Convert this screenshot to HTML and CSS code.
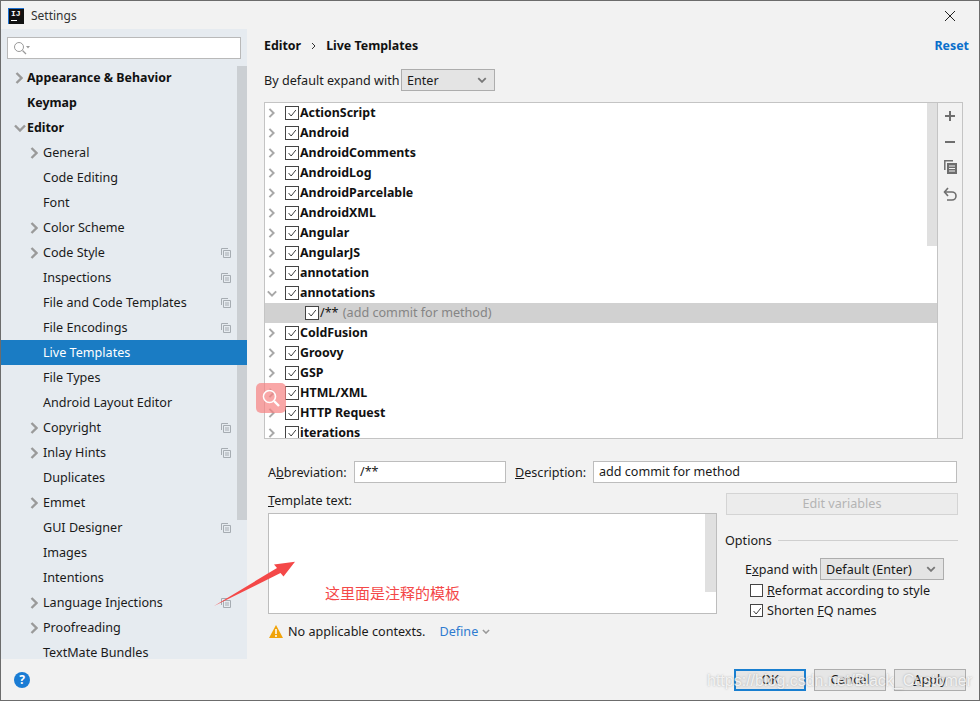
FILE: index.html
```html
<!DOCTYPE html>
<html lang="en">
<head>
    <meta charset="UTF-8">
    <meta name="viewport" content="width=device-width, initial-scale=1.0">
    <title>Settings</title>
    <link rel="stylesheet" href="styles.css">
</head>
<body>
    <svg class="defs" width="0" height="0">
        <symbol id="arrow-right" viewBox="0 0 8 12"><path d="M1.5 1l5 5-5 5" fill="none" stroke="currentColor" stroke-width="2.4"/></symbol>
        <symbol id="arrow-down" viewBox="0 0 12 8"><path d="M1 1.5l5 5 5-5" fill="none" stroke="currentColor" stroke-width="2.4"/></symbol>
        <symbol id="project" viewBox="0 0 10 10"><path d="M.5 7V.5H7M2.5 2.5h7v7h-7zM4 5h4M4 7h4" fill="none" stroke="currentColor"/></symbol>
        <symbol id="tick" viewBox="0 0 14 14"><path d="M3 7l3 3.5 5.5-7" fill="none" stroke="#333" stroke-width="1.1"/></symbol>
    </svg>

    <div class="window">
        <div class="titlebar">
            <div class="app-icon"><span>IJ</span><i></i></div>
            <div class="title">Settings</div>
            <svg class="close" width="12" height="12" viewBox="0 0 12 12"><path d="M1 1l10 10M11 1L1 11" stroke="#222" stroke-width="1"/></svg>
        </div>

        <div class="content">
            <div class="sidebar">
                <div class="search">
                    <svg width="17" height="14" viewBox="0 0 17 14"><circle cx="6" cy="6" r="4.5" fill="none" stroke="#9a9a9a"/><path d="M9.5 9.5l3.5 3.5" stroke="#9a9a9a" stroke-width="1.2"/><path d="M13 5h4l-2 2.5z" fill="#9a9a9a"/></svg>
                </div>
                <ul class="nav">
                    <li class="nav-item top"><svg class="nav-arrow"><use href="#arrow-right"/></svg>Appearance &amp; Behavior</li>
                    <li class="nav-item top">Keymap</li>
                    <li class="nav-item top"><svg class="nav-arrow down"><use href="#arrow-down"/></svg>Editor</li>
                    <li class="nav-item"><svg class="nav-arrow"><use href="#arrow-right"/></svg>General</li>
                    <li class="nav-item">Code Editing</li>
                    <li class="nav-item">Font</li>
                    <li class="nav-item"><svg class="nav-arrow"><use href="#arrow-right"/></svg>Color Scheme</li>
                    <li class="nav-item"><svg class="nav-arrow"><use href="#arrow-right"/></svg>Code Style<svg class="nav-copy"><use href="#project"/></svg></li>
                    <li class="nav-item">Inspections<svg class="nav-copy"><use href="#project"/></svg></li>
                    <li class="nav-item">File and Code Templates<svg class="nav-copy"><use href="#project"/></svg></li>
                    <li class="nav-item">File Encodings<svg class="nav-copy"><use href="#project"/></svg></li>
                    <li class="nav-item active">Live Templates</li>
                    <li class="nav-item">File Types</li>
                    <li class="nav-item">Android Layout Editor</li>
                    <li class="nav-item"><svg class="nav-arrow"><use href="#arrow-right"/></svg>Copyright<svg class="nav-copy"><use href="#project"/></svg></li>
                    <li class="nav-item"><svg class="nav-arrow"><use href="#arrow-right"/></svg>Inlay Hints<svg class="nav-copy"><use href="#project"/></svg></li>
                    <li class="nav-item">Duplicates</li>
                    <li class="nav-item"><svg class="nav-arrow"><use href="#arrow-right"/></svg>Emmet</li>
                    <li class="nav-item">GUI Designer<svg class="nav-copy"><use href="#project"/></svg></li>
                    <li class="nav-item">Images</li>
                    <li class="nav-item">Intentions</li>
                    <li class="nav-item"><svg class="nav-arrow"><use href="#arrow-right"/></svg>Language Injections<svg class="nav-copy"><use href="#project"/></svg></li>
                    <li class="nav-item"><svg class="nav-arrow"><use href="#arrow-right"/></svg>Proofreading</li>
                    <li class="nav-item">TextMate Bundles</li>
                </ul>
                <div class="side-scroll"></div>
            </div>

            <div class="main">
                <div class="crumbs">
                    <span>Editor</span>
                    <svg width="5" height="8" viewBox="0 0 5 8"><path d="M1 1l3 3-3 3" fill="none" stroke="#333"/></svg>
                    <span>Live Templates</span>
                    <a class="reset">Reset</a>
                </div>

                <div class="expand-row">
                    <span class="expand-label">By default expand with</span>
                    <div class="select expand-select">Enter<svg width="10" height="6"><use href="#arrow-down"/></svg></div>
                </div>

                <div class="tree-box">
                    <ul class="tree">
                        <li class="tree-row"><svg class="tree-arrow"><use href="#arrow-right"/></svg><span class="check on"><svg><use href="#tick"/></svg></span>ActionScript</li>
                        <li class="tree-row"><svg class="tree-arrow"><use href="#arrow-right"/></svg><span class="check on"><svg><use href="#tick"/></svg></span>Android</li>
                        <li class="tree-row"><svg class="tree-arrow"><use href="#arrow-right"/></svg><span class="check on"><svg><use href="#tick"/></svg></span>AndroidComments</li>
                        <li class="tree-row"><svg class="tree-arrow"><use href="#arrow-right"/></svg><span class="check on"><svg><use href="#tick"/></svg></span>AndroidLog</li>
                        <li class="tree-row"><svg class="tree-arrow"><use href="#arrow-right"/></svg><span class="check on"><svg><use href="#tick"/></svg></span>AndroidParcelable</li>
                        <li class="tree-row"><svg class="tree-arrow"><use href="#arrow-right"/></svg><span class="check on"><svg><use href="#tick"/></svg></span>AndroidXML</li>
                        <li class="tree-row"><svg class="tree-arrow"><use href="#arrow-right"/></svg><span class="check on"><svg><use href="#tick"/></svg></span>Angular</li>
                        <li class="tree-row"><svg class="tree-arrow"><use href="#arrow-right"/></svg><span class="check on"><svg><use href="#tick"/></svg></span>AngularJS</li>
                        <li class="tree-row"><svg class="tree-arrow"><use href="#arrow-right"/></svg><span class="check on"><svg><use href="#tick"/></svg></span>annotation</li>
                        <li class="tree-row"><svg class="tree-arrow open"><use href="#arrow-down"/></svg><span class="check on"><svg><use href="#tick"/></svg></span>annotations</li>
                        <li class="tree-row child selected"><span class="check on"><svg><use href="#tick"/></svg></span><span>/** <em>(add commit for method)</em></span></li>
                        <li class="tree-row"><svg class="tree-arrow"><use href="#arrow-right"/></svg><span class="check on"><svg><use href="#tick"/></svg></span>ColdFusion</li>
                        <li class="tree-row"><svg class="tree-arrow"><use href="#arrow-right"/></svg><span class="check on"><svg><use href="#tick"/></svg></span>Groovy</li>
                        <li class="tree-row"><svg class="tree-arrow"><use href="#arrow-right"/></svg><span class="check on"><svg><use href="#tick"/></svg></span>GSP</li>
                        <li class="tree-row"><svg class="tree-arrow"><use href="#arrow-right"/></svg><span class="check on"><svg><use href="#tick"/></svg></span>HTML/XML</li>
                        <li class="tree-row"><svg class="tree-arrow"><use href="#arrow-right"/></svg><span class="check on"><svg><use href="#tick"/></svg></span>HTTP Request</li>
                        <li class="tree-row"><svg class="tree-arrow"><use href="#arrow-right"/></svg><span class="check on"><svg><use href="#tick"/></svg></span>iterations</li>
                    </ul>
                    <div class="tree-scroll"></div>
                    <div class="toolbar">
                        <svg width="12" height="12" viewBox="0 0 12 12"><path d="M6 1v10M1 6h10" stroke="#6e6e6e" stroke-width="2"/></svg>
                        <svg width="12" height="12" viewBox="0 0 12 12"><path d="M1 6h10" stroke="#6e6e6e" stroke-width="2"/></svg>
                        <svg class="tool-copy" width="13" height="14" viewBox="0 0 13 14"><path d="M.8 10V.8H9" fill="none" stroke="#6e6e6e" stroke-width="1.5"/><path d="M3 3h10v11H3z" fill="#6e6e6e"/><path d="M5 6h6M5 8.5h6M5 11h6" stroke="#f2f2f2"/></svg>
                        <svg class="tool-undo" width="14" height="14" viewBox="0 0 14 14"><path d="M2 5h7a4 4 0 0 1 0 8H4" fill="none" stroke="#6e6e6e" stroke-width="1.6"/><path d="M5 1L1.5 5 5 9" fill="none" stroke="#6e6e6e" stroke-width="1.6"/></svg>
                    </div>
                </div>

                <div class="field-row">
                    <label class="abbr-label">A<u>b</u>breviation:</label>
                    <div class="input abbr-input">/**</div>
                    <label class="desc-label"><u>D</u>escription:</label>
                    <div class="input desc-input">add commit for method</div>
                </div>

                <div class="lower">
                    <div class="template-col">
                        <label class="template-label"><u>T</u>emplate text:</label>
                        <div class="template-box">
                            <div class="template-scroll"></div>
                            <span class="note">这里面是注释的模板</span>
                        </div>
                        <div class="context">
                            <svg width="14" height="13" viewBox="0 0 14 13"><path d="M7 0l7 13H0z" fill="#f0a30a"/><path d="M7 4v5M7 10v2" stroke="#fff" stroke-width="1.5"/></svg>
                            <span>No applicable contexts.</span>
                            <a class="define">Define<svg width="8" height="5"><use href="#arrow-down"/></svg></a>
                        </div>
                    </div>
                    <div class="options-col">
                        <div class="edit-vars">Edit variables</div>
                        <div class="options-head"><span>Options</span><i></i></div>
                        <div class="expand-with">
                            <label>E<u>x</u>pand with</label>
                            <div class="select options-select">Default (Enter)<svg width="10" height="6"><use href="#arrow-down"/></svg></div>
                        </div>
                        <div class="option"><span class="check"></span><span><u>R</u>eformat according to style</span></div>
                        <div class="option"><span class="check on"><svg><use href="#tick"/></svg></span><span>Shorten <u>F</u>Q names</span></div>
                    </div>
                </div>
            </div>
        </div>

        <div class="footer">
            <div class="help">?</div>
            <div class="buttons">
                <div class="btn default">OK</div>
                <div class="btn">Cancel</div>
                <div class="btn"><u>A</u>pply</div>
            </div>
        </div>

        <!-- things pasted on top of the screenshot -->
        <div class="badge">
            <svg width="20" height="20" viewBox="0 0 20 20"><circle cx="8.5" cy="8.5" r="6" fill="none" stroke="#fff" stroke-width="1.6"/><path d="M13 13l5 5" stroke="#fff" stroke-width="2.4"/></svg>
        </div>
        <svg class="red-arrow" width="84" height="46" viewBox="0 0 84 46"><path d="M0 45L63 7 60 3.5 81 .7 69.5 15.5 66.5 12z" fill="#f44848"/></svg>
        <div class="watermark">https://blog.csdn.net/Black_Customer</div>
    </div>
</body>
</html>
```

FILE: styles.css
```css
* {
    box-sizing: border-box;
}
body {
    margin: 0;
    padding: 0;
    font-family: "Noto Sans", "Noto Sans CJK SC", sans-serif;
    font-size: 12.6px;
    color: #1a1a1a;
    background-color: #f2f2f2;
}
ul {
    list-style: none;
    margin: 0;
    padding: 0;
}
svg {
    display: block;
    flex: none;
}
.defs {
    position: absolute;
}
.window {
    position: relative;
    width: 980px;
    height: 701px;
    border: 1px solid #6c6c6c;
    display: flex;
    flex-direction: column;
    overflow: hidden;
}

/* title bar */
.titlebar {
    height: 28px;
    flex: none;
    display: flex;
    align-items: center;
    padding-left: 7px;
    padding-right: 23px;
}
.app-icon {
    width: 16px;
    height: 16px;
    background: #111;
    border-left: 1px solid #1b6fd0;
    border-top: 1px solid #1b6fd0;
    color: white;
    font-family: "Liberation Mono", monospace;
    font-weight: bold;
    font-size: 8px;
    line-height: 9px;
    padding-left: 2px;
    margin-top: 1px;
}
.app-icon span {
    display: block;
}
.app-icon i {
    display: block;
    width: 6px;
    height: 1px;
    background: white;
    margin-top: 2px;
}
.title {
    margin-left: 7px;
    font-size: 12px;
    color: #333;
    flex: 1;
}
.close {
    margin-top: 1px;
}

.content {
    flex: 1;
    display: flex;
    min-height: 0;
}

/* left side */
.sidebar {
    position: relative;
    width: 246px;
    flex: none;
    background-color: #e6ebf0;
    overflow: hidden;
}
.search {
    height: 22px;
    margin: 8px 6px 6px;
    background: white;
    border: 1px solid #b9b9b9;
    display: flex;
    align-items: center;
    padding-left: 5px;
}
.nav-item {
    position: relative;
    height: 25px;
    line-height: 25px;
    padding-left: 42px;
    white-space: nowrap;
}
.nav-item.top {
    padding-left: 26px;
    font-weight: bold;
    font-size: 12.4px;
    color: #111;
}
.nav-item.active {
    z-index: 1;
    background-color: #1a7cc4;
    color: white;
}
.nav-arrow {
    position: absolute;
    left: 29px;
    top: 7px;
    width: 8px;
    height: 12px;
    color: #9a9a9a;
}
.top .nav-arrow {
    left: 14px;
}
.top .nav-arrow.down {
    left: 13px;
    top: 9px;
    width: 12px;
    height: 8px;
}
.nav-copy {
    position: absolute;
    left: 220px;
    top: 8px;
    width: 10px;
    height: 10px;
    color: #a6acb2;
}
.side-scroll {
    position: absolute;
    left: 236px;
    top: 37px;
    width: 10px;
    height: 454px;
    background-color: #cbcfd3;
}

/* right side */
.main {
    flex: 1;
    min-width: 0;
    padding: 9px 16px 0 17px;
    display: flex;
    flex-direction: column;
}
.crumbs {
    height: 16px;
    display: flex;
    align-items: center;
    gap: 10px;
    font-weight: bold;
    font-size: 12.4px;
    line-height: 16px;
    color: #111;
}
.reset {
    margin-left: auto;
    margin-right: -6px;
    color: #0a6fcb;
}
.expand-row {
    margin-top: 15px;
    height: 22px;
    display: flex;
    align-items: center;
}
.expand-label {
    width: 137px;
    white-space: nowrap;
}
.select {
    height: 22px;
    background-color: #e4e4e4;
    border: 1px solid #adadad;
    display: flex;
    align-items: center;
    justify-content: space-between;
    padding: 0 7px 0 5px;
}
.select svg {
    color: #777;
}
.expand-select {
    width: 94px;
}

.tree-box {
    position: relative;
    margin-top: 11px;
    height: 337px;
    border: 1px solid #c4c4c4;
    display: flex;
    background: white;
}
.tree {
    flex: 1;
    min-width: 0;
    overflow: hidden;
}
.tree-row {
    position: relative;
    height: 20px;
    line-height: 19px;
    display: flex;
    align-items: flex-start;
    padding-left: 20px;
    font-weight: bold;
    font-size: 12.4px;
    color: #111;
    white-space: nowrap;
}
.tree-row.child {
    padding-left: 40px;
    font-weight: normal;
    font-size: 12.6px;
}
.tree-row.selected {
    background-color: #d1d1d1;
}
.tree-row em {
    font-style: normal;
    color: #858585;
    margin-left: 1px;
}
.tree-arrow {
    position: absolute;
    left: 3px;
    top: 5px;
    width: 7px;
    height: 10px;
    color: #a8a8a8;
}
.tree-arrow.open {
    left: 2px;
    top: 7px;
    width: 10px;
    height: 7px;
}
.check {
    width: 14px;
    height: 14px;
    flex: none;
    background: white;
    border: 1px solid #444;
    margin-right: 1px;
}
.tree-row .check {
    margin-top: 3px;
}
.check svg {
    width: 12px;
    height: 12px;
}
.tree-scroll {
    position: absolute;
    right: 25px;
    top: 0;
    width: 10px;
    height: 143px;
    background-color: #e0e0e0;
}
.toolbar {
    width: 25px;
    flex: none;
    background-color: #f2f2f2;
    border-left: 1px solid #c4c4c4;
    padding-top: 7px;
    display: flex;
    flex-direction: column;
    align-items: center;
    gap: 14px;
}
.tool-copy {
    margin-top: -2px;
}
.tool-undo {
    margin-top: -1px;
}

.field-row {
    margin-top: 22px;
    margin-left: 4px;
    margin-right: 6px;
    height: 22px;
    display: flex;
    align-items: center;
}
.abbr-label {
    width: 86px;
}
.input {
    height: 22px;
    background: white;
    border: 1px solid #bdbdbd;
    line-height: 19px;
    padding-left: 5px;
}
.abbr-input {
    width: 152px;
}
.desc-label {
    margin-left: 9px;
    width: 78px;
}
.desc-input {
    flex: 1;
}

.lower {
    margin-top: 10px;
    margin-left: 4px;
    margin-right: 5px;
    display: flex;
    gap: 9px;
}
.template-col {
    width: 449px;
    flex: none;
}
.template-label {
    display: block;
    height: 20px;
    line-height: 15px;
}
.template-box {
    position: relative;
    height: 101px;
    background: white;
    border: 1px solid #bdbdbd;
}
.template-scroll {
    position: absolute;
    right: 0;
    top: 0;
    width: 11px;
    height: 78px;
    background-color: #e0e0e0;
}
.note {
    position: absolute;
    left: 56px;
    top: 68px;
    font-family: "Noto Sans CJK SC", sans-serif;
    font-size: 15px;
    line-height: 22px;
    color: #f44848;
}
.context {
    margin-top: 8px;
    display: flex;
    align-items: center;
    height: 18px;
    padding-left: 1px;
}
.context span {
    margin-left: 5px;
}
.define {
    margin-left: 14px;
    color: #2f7bd0;
    display: flex;
    align-items: center;
    gap: 4px;
}
.define svg {
    color: #999;
}

.options-col {
    flex: 1;
    min-width: 0;
}
.edit-vars {
    height: 22px;
    line-height: 19px;
    background-color: #ececec;
    border: 1px solid #d4d4d4;
    color: #b4b4b4;
    text-align: center;
}
.options-head {
    margin-top: 16px;
    margin-left: -1px;
    height: 18px;
    display: flex;
    align-items: center;
    gap: 6px;
}
.options-head i {
    flex: 1;
    height: 1px;
    background-color: #cfcfcf;
}
.expand-with {
    margin-top: 9px;
    display: flex;
    align-items: center;
    padding-left: 19px;
    height: 22px;
}
.expand-with label {
    width: 75px;
    white-space: nowrap;
}
.options-select {
    width: 124px;
}
.option {
    height: 20px;
    line-height: 19px;
    display: flex;
    align-items: center;
    padding-left: 24px;
}
.option .check {
    width: 13px;
    height: 13px;
    margin-right: 4px;
}

/* bottom bar */
.footer {
    height: 41px;
    flex: none;
    display: flex;
    align-items: center;
    justify-content: space-between;
    padding: 0 13px 0 13px;
}
.help {
    width: 16px;
    height: 16px;
    border-radius: 50%;
    background-color: #1a7cd4;
    color: white;
    font-size: 12px;
    font-weight: bold;
    line-height: 16px;
    text-align: center;
}
.buttons {
    display: flex;
    gap: 8px;
}
.btn {
    width: 72px;
    height: 22px;
    line-height: 19px;
    text-align: center;
    background-color: #e6e6e6;
    border: 1px solid #adadad;
}
.btn.default {
    border: 2px solid #1a7fd0;
    line-height: 17px;
}

/* overlays */
.badge {
    position: absolute;
    left: 255px;
    top: 382px;
    width: 30px;
    height: 30px;
    border-radius: 5px;
    background-color: rgba(246, 130, 130, 0.7);
    display: flex;
    align-items: center;
    justify-content: center;
}
.red-arrow {
    position: absolute;
    left: 213px;
    top: 560px;
}
.watermark {
    position: absolute;
    left: 706px;
    top: 668px;
    font-family: "Liberation Sans", sans-serif;
    font-size: 16px;
    line-height: 24px;
    white-space: nowrap;
    color: rgba(255, 255, 255, 0.8);
    text-shadow: 0 0 2px rgba(110, 110, 110, 0.55);
}
```
